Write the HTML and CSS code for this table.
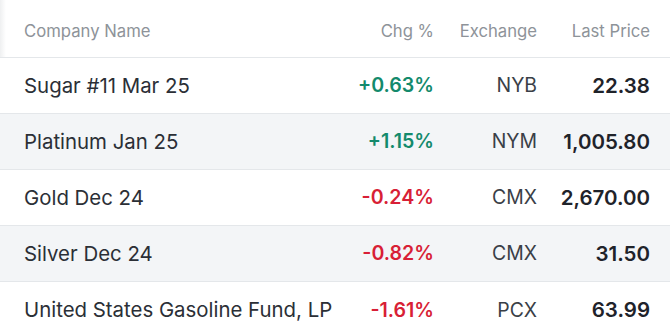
FILE: index.html
```html
<!DOCTYPE html>
<html>
<head>
<meta charset="utf-8">
<link rel="stylesheet" href="styles.css">
</head>
<body>
<div class="table">
  <div class="row head">
    <div class="c name">Company Name</div>
    <div class="c num">Chg %</div>
    <div class="c num">Exchange</div>
    <div class="c num">Last Price</div>
  </div>
  <div class="row">
    <div class="c name">Sugar #11 Mar 25</div>
    <div class="c num chg up">+0.63%</div>
    <div class="c num ex">NYB</div>
    <div class="c num price">22.38</div>
  </div>
  <div class="row alt">
    <div class="c name">Platinum Jan 25</div>
    <div class="c num chg up">+1.15%</div>
    <div class="c num ex">NYM</div>
    <div class="c num price">1,005.80</div>
  </div>
  <div class="row">
    <div class="c name">Gold Dec 24</div>
    <div class="c num chg down">-0.24%</div>
    <div class="c num ex">CMX</div>
    <div class="c num price">2,670.00</div>
  </div>
  <div class="row alt">
    <div class="c name">Silver Dec 24</div>
    <div class="c num chg down">-0.82%</div>
    <div class="c num ex">CMX</div>
    <div class="c num price">31.50</div>
  </div>
  <div class="row last">
    <div class="c name">United States Gasoline Fund, LP</div>
    <div class="c num chg down">-1.61%</div>
    <div class="c num ex">PCX</div>
    <div class="c num price">63.99</div>
  </div>
</div>
</body>
</html>
```

FILE: styles.css
```css
html, body {
  margin: 0;
  padding: 0;
  background: #ffffff;
}
body {
  font-family: Inter, "Liberation Sans", sans-serif;
  color: #2b2f36;
  width: 670px;
  height: 335px;
  overflow: hidden;
}
.table {
  display: flex;
  flex-direction: column;
}
.row {
  box-sizing: border-box;
  display: grid;
  grid-template-columns: 1fr 100px 103px 113px;
  align-items: center;
  height: 56px;
  padding: 0 20px 1px 24px;
  border-bottom: 1px solid #e4e7ea;
  background: #ffffff;
  font-size: 20px;
}
.row.head {
  height: 58px;
  padding-top: 5px;
  padding-bottom: 0;
  font-size: 16.7px;
  color: #8e9399;
  background: linear-gradient(to right, #eff0f1 0, #ffffff 6px);
}
.row.alt {
  background: #f3f5f7;
}
.row.last {
  border-bottom: none;
}
.c {
  white-space: nowrap;
}
.name {
  font-size: 20.4px;
}
.head .name {
  font-size: 16.7px;
}
.num {
  text-align: right;
}
.chg {
  font-weight: 600;
  font-size: 19.6px;
}
.up {
  color: #138a6c;
}
.down {
  color: #d81f36;
}
.ex {
  color: #3a3f47;
  font-size: 19.4px;
}
.price {
  font-weight: 600;
  font-size: 20.5px;
  color: #1f232a;
}
```
